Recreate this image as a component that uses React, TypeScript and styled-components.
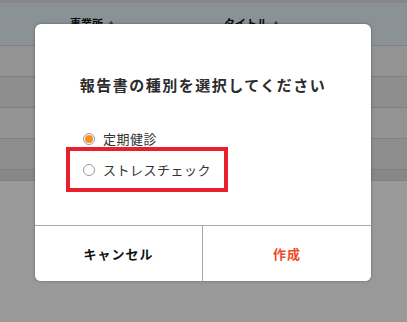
import styled, { createGlobalStyle } from "styled-components";

const GlobalStyle = createGlobalStyle`
  html, body {
    margin: 0;
    padding: 0;
    background: #ffffff;
    font-family: "Noto Sans CJK JP", "Noto Sans", sans-serif;
  }
`;

const Page = styled.div`
  width: 407px;
  height: 322px;
  overflow: hidden;
  position: relative;
  background: #ffffff;
`;

const TopStrip = styled.div`
  height: 3px;
  background: #e1e1e1;
`;

const TableHead = styled.div`
  height: 43px;
  display: grid;
  grid-template-columns: 154px 1fr;
  align-items: center;
  padding-left: 70px;
  background: #e6f3fb;
  border-bottom: 1px solid #d5d5d5;
  box-sizing: border-box;
  font-size: 11px;
  font-weight: 700;
  color: #111;
`;

const HeadCell = styled.span`
  display: flex;
  align-items: center;
  gap: 4px;
  margin-top: -2px;
`;

const SortArrow = styled.span`
  font-size: 8px;
  color: #3f6fb0;
`;

const Row = styled.div<{ $shade?: boolean }>`
  height: 31px;
  box-sizing: border-box;
  border-bottom: 1px solid #d5d5d5;
  background: ${(p) => (p.$shade ? "#ececec" : "#f6f6f6")};
`;

const Band = styled.div`
  height: 10px;
  background: #e2e2e2;
  border-bottom: 1px solid #d8d8d8;
`;

const Overlay = styled.div`
  position: absolute;
  inset: 0;
  background: rgba(0, 0, 0, 0.4);
`;

const Modal = styled.div`
  position: absolute;
  left: 35px;
  top: 24px;
  width: 336px;
  height: 257px;
  background: #ffffff;
  border-radius: 6px;
  box-shadow: 0 0 3px rgba(0, 0, 0, 0.35);
  display: flex;
  flex-direction: column;
  overflow: hidden;
`;

const Body = styled.div`
  flex: 1;
  padding: 51px 0 0 48px;
`;

const Title = styled.h2`
  margin: 0 0 28px -48px;
  text-align: center;
  font-size: 15px;
  line-height: 20px;
  font-weight: 700;
  letter-spacing: 1.5px;
  color: #2b2b2b;
`;

const Option = styled.label`
  position: relative;
  display: flex;
  align-items: center;
  gap: 8px;
  height: 31px;
  width: max-content;
  font-size: 13px;
  letter-spacing: 0.5px;
  color: #333;
`;

const Radio = styled.span<{ $checked?: boolean }>`
  width: 12px;
  height: 12px;
  box-sizing: border-box;
  border-radius: 50%;
  border: 1px solid #9a9a9a;
  display: flex;
  align-items: center;
  justify-content: center;

  &::after {
    content: "";
    width: 8px;
    height: 8px;
    border-radius: 50%;
    background: ${(p) => (p.$checked ? "#f7901e" : "transparent")};
  }
`;

const Highlight = styled.span`
  position: absolute;
  left: -17px;
  top: -7px;
  width: 162px;
  height: 45px;
  box-sizing: border-box;
  border: 4px solid #e8202a;
`;

const Footer = styled.div`
  height: 55px;
  display: grid;
  grid-template-columns: 167px 1fr;
  border-top: 1px solid #a8a8a8;
`;

const FooterButton = styled.button<{ $accent?: boolean }>`
  border: none;
  background: #fff;
  font-family: inherit;
  font-size: 13px;
  font-weight: 700;
  letter-spacing: 1px;
  color: ${(p) => (p.$accent ? "#f04a25" : "#111")};
  & + & {
    border-left: 1px solid #a8a8a8;
  }
`;

export default function App() {
  return (
    <Page>
      <GlobalStyle />
      <TopStrip />
      <TableHead>
        <HeadCell>
          事業所<SortArrow>▲</SortArrow>
        </HeadCell>
        <HeadCell>
          タイトル<SortArrow>▲</SortArrow>
        </HeadCell>
      </TableHead>
      <Row />
      <Row $shade />
      <Row />
      <Row $shade />
      <Band />
      <Overlay />
      <Modal>
        <Body>
          <Title>報告書の種別を選択してください</Title>
          <Option>
            <Radio $checked />
            定期健診
          </Option>
          <Option>
            <Radio />
            ストレスチェック
            <Highlight />
          </Option>
        </Body>
        <Footer>
          <FooterButton>キャンセル</FooterButton>
          <FooterButton $accent>作成</FooterButton>
        </Footer>
      </Modal>
    </Page>
  );
}
